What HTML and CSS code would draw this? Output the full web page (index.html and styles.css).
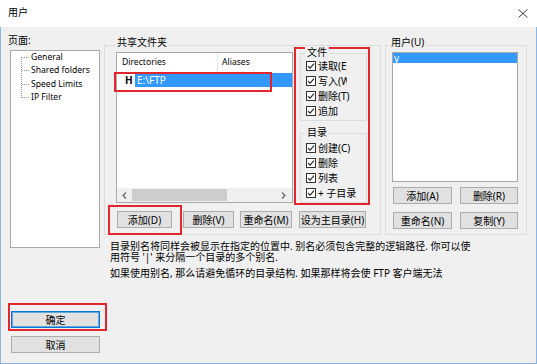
FILE: index.html
```html
<!DOCTYPE html>
<html>
<head>
<meta charset="utf-8">
<link rel="stylesheet" href="styles.css">
</head>
<body>
<div class="window">
  <div class="titlebar">
    <span class="title">用户</span>
    <svg class="close" width="10" height="9" viewBox="0 0 10 9"><path d="M0.5 0.5L9.5 8.5M9.5 0.5L0.5 8.5" stroke="#3a3a3a" stroke-width="1" fill="none"/></svg>
  </div>
  <div class="content">
    <div class="leftcol">
      <div class="label">页面:</div>
      <div class="tree">
        <svg class="tree-lines" width="20" height="54" viewBox="0 0 20 54">
          <g stroke="#9a9a9a" stroke-width="1" stroke-dasharray="1 1" fill="none">
            <path d="M10.5 6 V47"/>
            <path d="M11 6.5 H19"/>
            <path d="M11 19.5 H19"/>
            <path d="M11 33.5 H19"/>
            <path d="M11 46.5 H19"/>
          </g>
        </svg>
        <ul class="tree-items">
          <li>General</li>
          <li>Shared folders</li>
          <li>Speed Limits</li>
          <li>IP Filter</li>
        </ul>
      </div>
      <div class="btnwrap ok-wrap">
        <button class="btn default wide">确定</button>
        <span class="mark mark-ok"></span>
      </div>
      <button class="btn wide cancel">取消</button>
    </div>
    <div class="main">
      <div class="groups">
        <div class="group shared">
          <div class="gtitle shared-title">共享文件夹</div>
          <div class="sf-body">
            <div class="list">
              <div class="lhead">
                <div class="col1">Directories</div>
                <div class="col2">Aliases</div>
              </div>
              <div class="lrow">
                <span class="home">H</span>
                <span class="sel">E:\FTP</span>
              </div>
              <div class="lspace"></div>
              <div class="hscroll">
                <div class="arrow">
                  <svg width="5" height="7" viewBox="0 0 5 7"><path d="M4 0.5L1 3.5L4 6.5" stroke="#606060" stroke-width="1.1" fill="none"/></svg>
                </div>
                <div class="thumb"></div>
                <div class="sp"></div>
                <div class="arrow r">
                  <svg width="5" height="7" viewBox="0 0 5 7"><path d="M1 0.5L4 3.5L1 6.5" stroke="#606060" stroke-width="1.1" fill="none"/></svg>
                </div>
              </div>
              <span class="mark mark-row"></span>
            </div>
            <div class="perms">
              <div class="pgroup">
                <div class="ptitle">文件</div>
                <div class="prows">
                  <div class="cb clip"><svg width="10" height="10" viewBox="0 0 10 10"><rect x="0.5" y="0.5" width="9" height="9" fill="#fff" stroke="#333"/><path d="M2 5.2L4 7.2L8 2.6" stroke="#222" stroke-width="1.1" fill="none"/></svg><span>读取(E)</span></div>
                  <div class="cb clip"><svg width="10" height="10" viewBox="0 0 10 10"><rect x="0.5" y="0.5" width="9" height="9" fill="#fff" stroke="#333"/><path d="M2 5.2L4 7.2L8 2.6" stroke="#222" stroke-width="1.1" fill="none"/></svg><span>写入(W)</span></div>
                  <div class="cb"><svg width="10" height="10" viewBox="0 0 10 10"><rect x="0.5" y="0.5" width="9" height="9" fill="#fff" stroke="#333"/><path d="M2 5.2L4 7.2L8 2.6" stroke="#222" stroke-width="1.1" fill="none"/></svg><span>删除(T)</span></div>
                  <div class="cb"><svg width="10" height="10" viewBox="0 0 10 10"><rect x="0.5" y="0.5" width="9" height="9" fill="#fff" stroke="#333"/><path d="M2 5.2L4 7.2L8 2.6" stroke="#222" stroke-width="1.1" fill="none"/></svg><span>追加</span></div>
                </div>
              </div>
              <div class="pgroup dir">
                <div class="ptitle">目录</div>
                <div class="prows">
                  <div class="cb"><svg width="10" height="10" viewBox="0 0 10 10"><rect x="0.5" y="0.5" width="9" height="9" fill="#fff" stroke="#333"/><path d="M2 5.2L4 7.2L8 2.6" stroke="#222" stroke-width="1.1" fill="none"/></svg><span>创建(C)</span></div>
                  <div class="cb"><svg width="10" height="10" viewBox="0 0 10 10"><rect x="0.5" y="0.5" width="9" height="9" fill="#fff" stroke="#333"/><path d="M2 5.2L4 7.2L8 2.6" stroke="#222" stroke-width="1.1" fill="none"/></svg><span>删除</span></div>
                  <div class="cb"><svg width="10" height="10" viewBox="0 0 10 10"><rect x="0.5" y="0.5" width="9" height="9" fill="#fff" stroke="#333"/><path d="M2 5.2L4 7.2L8 2.6" stroke="#222" stroke-width="1.1" fill="none"/></svg><span>列表</span></div>
                  <div class="cb"><svg width="10" height="10" viewBox="0 0 10 10"><rect x="0.5" y="0.5" width="9" height="9" fill="#fff" stroke="#333"/><path d="M2 5.2L4 7.2L8 2.6" stroke="#222" stroke-width="1.1" fill="none"/></svg><span>+ 子目录</span></div>
                </div>
              </div>
            </div>
          </div>
          <div class="sbtns">
            <div class="btnwrap add-wrap">
              <button class="btn b-add">添加(D)</button>
              <span class="mark mark-add"></span>
            </div>
            <button class="btn b-del">删除(V)</button>
            <button class="btn b-ren">重命名(M)</button>
            <button class="btn b-home">设为主目录(H)</button>
          </div>
        </div>
        <div class="group users">
          <div class="gtitle users-title">用户(U)</div>
          <div class="ulist">
            <div class="urow">y</div>
          </div>
          <div class="ubtns first">
            <button class="btn ub1">添加(A)</button>
            <button class="btn ub2">删除(R)</button>
          </div>
          <div class="ubtns">
            <button class="btn ub1">重命名(N)</button>
            <button class="btn ub2">复制(Y)</button>
          </div>
        </div>
      </div>
      <div class="desc">
        <p>目录别名将同样会被显示在指定的位置中. 别名必须包含完整的逻辑路径. 你可以使<br>用符号 '|' 来分隔一个目录的多个别名.</p>
        <p>如果使用别名, 那么请避免循环的目录结构. 如果那样将会使 FTP 客户端无法</p>
      </div>
    </div>
  </div>
</div>
</body>
</html>
```

FILE: styles.css
```css
* { box-sizing: border-box; margin: 0; padding: 0; }
body {
  margin: 0;
  background: #fff;
  font-family: "Noto Sans", "Noto Sans CJK SC", sans-serif;
  font-size: 10px;
  color: #000;
}
.window {
  width: 537px;
  height: 364px;
  display: flex;
  flex-direction: column;
  overflow: hidden;
}
.titlebar {
  height: 27px;
  flex: none;
  background: #fff;
  display: flex;
  justify-content: space-between;
  align-items: flex-start;
  padding: 6px 9px 0 8px;
}
.title { line-height: 12px; font-size: 10px; }
.close { margin-top: 3px; }

.content {
  flex: 1;
  display: flex;
  background: #f0f0f0;
  border: 1px solid #8ab6e6;
  border-top: 0;
  padding-left: 7px;
}
.leftcol {
  width: 96px;
  flex: none;
  display: flex;
  flex-direction: column;
  padding-top: 7px;
}
.label { line-height: 12px; }
.tree {
  margin: 4px 0 0 2px;
  width: 90px;
  height: 198px;
  background: #fff;
  border: 1px solid #a9a9a9;
  display: flex;
  align-items: flex-start;
}
.tree-lines { flex: none; }
.tree-items { list-style: none; font-size: 8.6px; }
.tree-items li { height: 13.33px; line-height: 13.33px; white-space: nowrap; }

.btn {
  display: flex;
  align-items: center;
  justify-content: center;
  height: 17px;
  background: #e1e1e1;
  border: 1px solid #adadad;
  font-family: inherit;
  font-size: 10px;
  color: #000;
  line-height: 1;
  white-space: nowrap;
  flex: none;
}
.btn.default {
  border-color: #0078d7;
  box-shadow: inset 0 0 0 1px rgba(0, 120, 215, 0.55);
}
.btnwrap { position: relative; flex: none; }
.mark {
  position: absolute;
  border: 2px solid #e3262b;
  pointer-events: none;
}
.ok-wrap { margin: 63px 0 0 3px; width: 89px; }
.wide { width: 89px; }
.cancel { margin: 8px 0 0 3px; }
.mark-ok { left: -3px; top: -8px; width: 99px; height: 28px; }

.main {
  flex: 1;
  display: flex;
  flex-direction: column;
}
.groups {
  display: flex;
  gap: 4px;
  margin-top: 18px;
}
.group {
  border: 1px solid #dcdcdc;
  display: flex;
  flex-direction: column;
}
.gtitle {
  margin-top: -10px;
  height: 12px;
  line-height: 12px;
  padding: 0 2px;
  background: #f0f0f0;
  width: max-content;
}
.shared { width: 277px; padding-bottom: 6px; }
.shared-title { margin-left: 10px; }
.users { width: 142px; }
.users-title { margin-left: 3px; }

.sf-body { display: flex; align-items: flex-start; }
.list {
  position: relative;
  margin: 4px 0 0 11px;
  width: 177px;
  height: 151px;
  background: #fff;
  border: 1px solid #a9a9a9;
  display: flex;
  flex-direction: column;
}
.lhead { display: flex; height: 19px; flex: none; font-size: 8.6px; line-height: 19px; }
.col1 { width: 101px; border-right: 1px solid #e5e5e5; padding-left: 5px; }
.col2 { padding-left: 4px; }
.lrow {
  display: flex;
  height: 14px;
  margin-top: 1px;
  padding-left: 8px;
  flex: none;
  align-items: stretch;
}
.home { font-weight: 700; width: 10px; line-height: 14px; font-size: 10px; }
.sel {
  flex: 1;
  background: #3399ff;
  color: #fff;
  line-height: 14px;
  padding-left: 2px;
  font-size: 10px;
}
.lspace { flex: 1; }
.hscroll {
  height: 14px;
  flex: none;
  display: flex;
  background: #f0f0f0;
}
.arrow { width: 15px; display: flex; align-items: center; justify-content: center; }
.arrow.r { width: 17px; }
.thumb { width: 95px; background: #cdcdcd; margin: 1px 0; }
.sp { flex: 1; }
.mark-row { left: -3px; top: 19px; width: 158px; height: 20px; }

.perms {
  margin: -1px 0 0 1px;
  width: 76px;
  height: 158px;
  border: 2px solid #e3262b;
  display: flex;
  flex-direction: column;
}
.pgroup {
  border: 1px solid #dcdcdc;
  margin: 4px 1px 0 4px;
  padding: 0 0 2px 5px;
}
.pgroup.dir { margin-top: 12px; }
.pgroup.dir .prows { padding-top: 2px; }
.ptitle {
  margin: -8px 0 0 -1px;
  height: 12px;
  line-height: 12px;
  padding: 0 2px;
  background: #f0f0f0;
  width: max-content;
}
.cb {
  display: flex;
  align-items: center;
  height: 15px;
  white-space: nowrap;
  overflow: hidden;
}
.cb svg { flex: none; margin-right: 2px; }
.cb.clip { width: 41px; }

.sbtns { display: flex; margin-top: 6px; }
.add-wrap { margin-left: 12px; }
.b-add { width: 55px; }
.mark-add { left: -9px; top: -6px; width: 74px; height: 30px; }
.b-del { width: 51px; margin-left: 11px; }
.b-ren { width: 52px; margin-left: 6px; }
.b-home { width: 67px; margin-left: 7px; }

.ulist {
  margin: 4px 0 0 6px;
  width: 126px;
  height: 130px;
  background: #fff;
  border: 1px solid #a9a9a9;
}
.urow {
  height: 10px;
  line-height: 10px;
  background: #3399ff;
  color: #fff;
  padding-left: 1px;
  font-size: 10px;
}
.ubtns { display: flex; gap: 8px; margin: 8px 0 0 7px; }
.ubtns.first { margin-top: 5px; }
.ub1 { width: 59px; }
.ub2 { width: 58px; }

.desc { margin: 6px 0 0 6px; line-height: 11px; white-space: nowrap; }
.desc p + p { margin-top: 5px; }
```
